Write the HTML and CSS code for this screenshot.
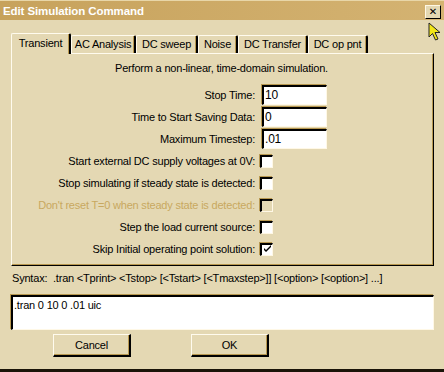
FILE: index.html
```html
<!DOCTYPE html>
<html>
<head>
<meta charset="utf-8">
<link rel="stylesheet" href="styles.css">
</head>
<body>
<div class="window">
  <div class="titlebar">
    <span class="title">Edit Simulation Command</span>
    <span class="close">✕</span>
  </div>
  <div class="client">
    <div class="tabs">
      <div class="tab active w-tran">Transient</div>
      <div class="tab w-ac">AC Analysis</div>
      <div class="tab w-dcs">DC sweep</div>
      <div class="tab w-noise">Noise</div>
      <div class="tab w-dct">DC Transfer</div>
      <div class="tab w-op">DC op pnt</div>
    </div>
    <div class="panel">
      <div class="desc">Perform a non-linear, time-domain simulation.</div>
      <div class="form">
        <label>Stop Time:</label><div class="ctl"><div class="input">10</div></div>
        <label>Time to Start Saving Data:</label><div class="ctl"><div class="input">0</div></div>
        <label>Maximum Timestep:</label><div class="ctl"><div class="input">.01</div></div>
        <label>Start external DC supply voltages at 0V:</label><div class="ctl"><div class="check"></div></div>
        <label>Stop simulating if steady state is detected:</label><div class="ctl"><div class="check"></div></div>
        <label class="disabled">Don't reset T=0 when steady state is detected:</label><div class="ctl"><div class="check off"></div></div>
        <label>Step the load current source:</label><div class="ctl"><div class="check"></div></div>
        <label>Skip Initial operating point solution:</label><div class="ctl"><div class="check"><svg width="9" height="9" viewBox="0 0 9 9"><path d="M1 3 L3 5 L8 0 L8 2 L3 7 L1 5 Z" fill="#000"/></svg></div></div>
      </div>
    </div>
    <div class="syntax">Syntax:&nbsp;&nbsp;.tran &lt;Tprint&gt; &lt;Tstop&gt; [&lt;Tstart&gt; [&lt;Tmaxstep&gt;]] [&lt;option&gt; [&lt;option&gt;] ...]</div>
    <div class="cmd">.tran 0 10 0 .01 uic</div>
    <div class="buttons">
      <div class="btn">Cancel</div>
      <div class="btn">OK</div>
    </div>
  </div>
  <div class="under"></div>
  <svg class="cursor" width="14" height="20" viewBox="0 0 14 20"><path d="M1 1 L1 15 L4.5 11.5 L7.5 18 L10 17 L7 10.5 L12 10.5 Z" fill="#f2e61a" stroke="#222" stroke-width="1"/></svg>
</div>
</body>
</html>
```
FILE: styles.css
```css
html, body {
  margin: 0;
  padding: 0;
}
body {
  width: 444px;
  height: 372px;
  overflow: hidden;
  background: #e4d8b3;
  font-family: "Liberation Sans", Arial, sans-serif;
  font-size: 11px;
  letter-spacing: -0.2px;
  color: #000;
}
.window {
  position: relative;
  width: 444px;
  height: 372px;
  display: flex;
  flex-direction: column;
  background: #e4d8b3;
}
.titlebar {
  height: 20px;
  flex: none;
  background: linear-gradient(to right, #c7a25c, #d4b372);
  border-top: 1px solid #e8d6a8;
  box-sizing: border-box;
  display: flex;
  align-items: center;
  justify-content: space-between;
  padding: 0 3px 0 3px;
}
.title {
  color: #fff;
  font-weight: bold;
  font-size: 11.5px;
  letter-spacing: -0.1px;
  font-family: "Liberation Sans", Arial, sans-serif;
}
.close {
  width: 14px;
  height: 12px;
  margin-top: 2px;
  background: #e4d8b3;
  border-top: 1px solid #fff8e4;
  border-left: 1px solid #fff8e4;
  border-right: 1px solid #000;
  border-bottom: 1px solid #000;
  font-size: 10px;
  font-weight: bold;
  line-height: 12px;
  text-align: center;
  letter-spacing: 0;
  font-family: "DejaVu Sans", sans-serif;
}
.client {
  flex: 1;
  display: flex;
  flex-direction: column;
  padding: 13px 10px 0 11px;
}
.tabs {
  display: flex;
  height: 20px;
  align-items: flex-end;
  padding-left: 1px;
}
.tab {
  height: 18px;
  box-sizing: border-box;
  padding-top: 2px;
  text-align: center;
  border-left: 1px solid #fffbee;
  border-top: 1px solid #fffbee;
  border-right: 2px solid #000;
  border-top-left-radius: 2px;
  border-top-right-radius: 2px;
  box-shadow: inset -1px 0 0 #b89850;
  white-space: nowrap;
}
.tab.active {
  height: 21px;
  margin-left: -1px;
  padding-top: 3px;
  position: relative;
  top: 1px;
  background: #e4d8b3;
  z-index: 1;
}
.w-tran { width: 60px; }
.w-ac { width: 65px; }
.w-dcs { width: 62px; }
.w-noise { width: 40px; }
.w-dct { width: 70px; }
.w-op { width: 60px; }
.panel {
  height: 213px;
  box-sizing: border-box;
  border-top: 1px solid #fffbee;
  border-left: 1px solid #fffbee;
  border-right: 1px solid #000;
  border-bottom: 1px solid #000;
  box-shadow: inset -1px -1px 0 #b89850;
  display: flex;
  flex-direction: column;
}
.desc {
  text-align: center;
  margin-top: 8px;
  height: 13px;
  line-height: 13px;
  padding-right: 2px;
}
.form {
  margin-top: 9px;
  display: grid;
  grid-template-columns: 243px 1fr;
  grid-auto-rows: 22px;
  column-gap: 5px;
}
.form label {
  text-align: right;
  line-height: 22px;
  white-space: nowrap;
}
.form label.disabled {
  color: #c8a860;
}
.ctl {
  display: flex;
  align-items: center;
}
.input {
  width: 65px;
  height: 20px;
  box-sizing: border-box;
  background: #fff;
  border-top: 2px solid #000;
  border-left: 2px solid #000;
  border-right: 1px solid #fff8e6;
  border-bottom: 1px solid #fff8e6;
  box-shadow: -1px -1px 0 #b89850;
  margin-left: 2px;
  padding-left: 1px;
  line-height: 16px;
  font-size: 12px;
}
.check {
  width: 13px;
  height: 13px;
  box-sizing: border-box;
  background: #fff;
  border-top: 2px solid #000;
  border-left: 2px solid #000;
  border-right: 1px solid #fff8e6;
  border-bottom: 1px solid #fff8e6;
  box-shadow: -1px -1px 0 #b89850;
  display: flex;
  align-items: center;
  justify-content: center;
}
.check.off {
  background: #e4d8b3;
}
.syntax {
  margin-top: 5px;
  height: 14px;
  line-height: 14px;
  white-space: nowrap;
  padding-left: 1px;
}
.cmd {
  margin-top: 10px;
  height: 35px;
  box-sizing: border-box;
  background: #fff;
  border-top: 2px solid #000;
  border-left: 2px solid #000;
  border-right: 1px solid #fff8e6;
  border-bottom: 1px solid #fff8e6;
  box-shadow: -1px -1px 0 #b89850;
  padding: 1px 1px;
  line-height: 14px;
}
.buttons {
  display: flex;
  margin-top: 4px;
  padding-left: 42px;
  gap: 60px;
}
.btn {
  width: 78px;
  height: 23px;
  box-sizing: border-box;
  border-top: 1px solid #fffbee;
  border-left: 1px solid #fffbee;
  border-right: 2px solid #000;
  border-bottom: 2px solid #000;
  box-shadow: inset -1px -1px 0 #b89850;
  text-align: center;
  line-height: 20px;
}
.under {
  height: 3px;
  flex: none;
  background: #1a1408;
}
.cursor {
  position: absolute;
  left: 428px;
  top: 22px;
}
```
